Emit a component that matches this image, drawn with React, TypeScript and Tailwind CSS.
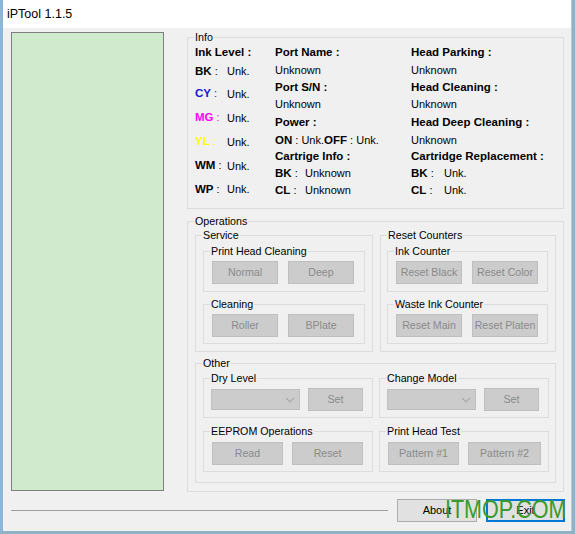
import type { ReactNode } from 'react';

// iPTool main window – static recreation

function GroupBox({
  title,
  className = '',
  children,
}: {
  title: string;
  className?: string;
  children?: ReactNode;
}) {
  return (
    <fieldset className={`border border-[#dcdcdc] ${className}`}>
      <legend className="ml-[6px] px-[1px] leading-[13px] text-[10.7px]">{title}</legend>
      {children}
    </fieldset>
  );
}

function Btn({ label, className = '' }: { label: string; className?: string }) {
  return (
    <div
      className={`h-[23px] flex items-center justify-center bg-[#cccccc] border border-[#bfbfbf] text-[#8a8a8a] text-[10.6px] whitespace-nowrap ${className}`}
    >
      {label}
    </div>
  );
}

function Combo() {
  return (
    <div className="w-[89px] h-[21px] bg-[#cccccc] border border-[#bfbfbf] flex items-center justify-end pr-[4px]">
      <svg width="10" height="6" viewBox="0 0 10 6">
        <polyline points="1,1 5,5 9,1" fill="none" stroke="#a8a8a8" strokeWidth="1.2" />
      </svg>
    </div>
  );
}

function Ink({ code, color }: { code: string; color: string }) {
  return (
    <div className="flex h-[24px] items-center">
      <span className={`w-[32px] ${color}`}>
        <b className="text-[11.5px]">{code}</b> :
      </span>
      <span>Unk.</span>
    </div>
  );
}

export default function App() {
  return (
    <div className="w-[575px] h-[534px] bg-[#8fb3c4] overflow-hidden font-['Liberation_Sans',Arial,sans-serif] text-[11px] text-black">
      <div className="relative w-[572px] h-[531px] bg-[#f0f0f0] border-l-[3px] border-[#8cb6d6] border-r border-r-[#b9c9d4] flex flex-col">
        {/* Title bar */}
        <div className="h-[28px] bg-white flex items-center pl-[4px] text-[12.5px]">iPTool 1.1.5</div>

        <div className="flex pt-[3px]">
          {/* Left preview panel */}
          <div className="ml-[8px] mt-[1px] w-[153px] h-[459px] bg-[#cfeacd] border border-[#7f7f7f]" />

          {/* Right column */}
          <div className="ml-[23px] w-[377px] flex flex-col">
            <GroupBox title="Info" className="h-[178px]">
              <div className="flex pl-[7px]">
                {/* Ink level */}
                <div className="w-[80px] flex flex-col">
                  <div className="h-[17px] flex items-center font-bold text-[11.5px]">Ink Level :</div>
                  <div className="h-[21px] flex items-center">
                    <span className="w-[32px]">
                      <b className="text-[11.5px]">BK</b> :
                    </span>
                    <span>Unk.</span>
                  </div>
                  <Ink code="CY" color="text-[#1515d6]" />
                  <Ink code="MG" color="text-[#ff00ff]" />
                  <Ink code="YL" color="text-[#ffff00]" />
                  <Ink code="WM" color="text-black" />
                  <div className="h-[23px] flex items-center">
                    <span className="w-[32px]">
                      <b className="text-[11.5px]">WP</b> :
                    </span>
                    <span>Unk.</span>
                  </div>
                </div>

                {/* Port / power / cartridge */}
                <div className="w-[136px] flex flex-col">
                  <div className="h-[17px] flex items-center font-bold text-[11.5px]">Port Name :</div>
                  <div className="h-[18px] flex items-center">Unknown</div>
                  <div className="h-[17px] flex items-center font-bold text-[11.5px]">Port S/N :</div>
                  <div className="h-[17px] flex items-center">Unknown</div>
                  <div className="h-[19px] flex items-center font-bold text-[11.5px]">Power :</div>
                  <div className="h-[17px] flex items-center whitespace-nowrap">
                    <b className="text-[11.5px]">ON</b>&nbsp;: Unk.<b className="text-[11.5px]">OFF</b>&nbsp;: Unk.
                  </div>
                  <div className="h-[16px] flex items-center font-bold text-[11.5px]">Cartrige Info :</div>
                  <div className="h-[17px] flex items-center">
                    <span className="w-[30px]">
                      <b className="text-[11.5px]">BK</b> :
                    </span>
                    Unknown
                  </div>
                  <div className="h-[17px] flex items-center">
                    <span className="w-[30px]">
                      <b className="text-[11.5px]">CL</b> :
                    </span>
                    Unknown
                  </div>
                </div>

                {/* Head status */}
                <div className="flex flex-col whitespace-nowrap">
                  <div className="h-[17px] flex items-center font-bold text-[11.5px]">Head Parking :</div>
                  <div className="h-[18px] flex items-center">Unknown</div>
                  <div className="h-[17px] flex items-center font-bold text-[11.5px]">Head Cleaning :</div>
                  <div className="h-[17px] flex items-center">Unknown</div>
                  <div className="h-[19px] flex items-center font-bold text-[11.5px]">Head Deep Cleaning :</div>
                  <div className="h-[17px] flex items-center">Unknown</div>
                  <div className="h-[16px] flex items-center font-bold text-[11.5px]">Cartridge Replacement :</div>
                  <div className="h-[17px] flex items-center">
                    <span className="w-[33px]">
                      <b className="text-[11.5px]">BK</b> :
                    </span>
                    Unk.
                  </div>
                  <div className="h-[17px] flex items-center">
                    <span className="w-[33px]">
                      <b className="text-[11.5px]">CL</b> :
                    </span>
                    Unk.
                  </div>
                </div>
              </div>
            </GroupBox>

            <GroupBox title="Operations" className="mt-[6px] h-[277px]">
              <div className="px-[7px] flex flex-col">
                <div className="mt-[1px] flex gap-[7px]">
                  <GroupBox title="Service" className="w-[178px] h-[123px]">
                    <div className="pl-[7px] flex flex-col">
                      <GroupBox title="Print Head Cleaning" className="mt-[3px] w-[162px] h-[47px]">
                        <div className="mt-[3px] pl-[8px] flex gap-[10px]">
                          <Btn label="Normal" className="w-[66px]" />
                          <Btn label="Deep" className="w-[66px]" />
                        </div>
                      </GroupBox>
                      <GroupBox title="Cleaning" className="mt-[6px] w-[162px] h-[46px]">
                        <div className="mt-[3px] pl-[8px] flex gap-[10px]">
                          <Btn label="Roller" className="w-[66px]" />
                          <Btn label="BPlate" className="w-[66px]" />
                        </div>
                      </GroupBox>
                    </div>
                  </GroupBox>

                  <GroupBox title="Reset Counters" className="w-[176px] h-[123px]">
                    <div className="pl-[6px] flex flex-col">
                      <GroupBox title="Ink Counter" className="mt-[3px] w-[161px] h-[47px]">
                        <div className="mt-[3px] pl-[8px] flex gap-[10px]">
                          <Btn label="Reset Black" className="w-[66px]" />
                          <Btn label="Reset Color" className="w-[66px]" />
                        </div>
                      </GroupBox>
                      <GroupBox title="Waste Ink Counter" className="mt-[6px] w-[161px] h-[46px]">
                        <div className="mt-[3px] pl-[8px] flex gap-[10px]">
                          <Btn label="Reset Main" className="w-[66px]" />
                          <Btn label="Reset Platen" className="w-[66px]" />
                        </div>
                      </GroupBox>
                    </div>
                  </GroupBox>
                </div>

                <GroupBox title="Other" className="mt-[5px] w-[361px] h-[126px]">
                  <div className="pl-[7px] flex flex-col">
                    <div className="mt-[2px] flex gap-[6px]">
                      <GroupBox title="Dry Level" className="w-[170px] h-[46px]">
                        <div className="mt-[3px] pl-[7px] flex items-center gap-[8px]">
                          <Combo />
                          <Btn label="Set" className="w-[55px]" />
                        </div>
                      </GroupBox>
                      <GroupBox title="Change Model" className="w-[170px] h-[46px]">
                        <div className="mt-[3px] pl-[7px] flex items-center gap-[8px]">
                          <Combo />
                          <Btn label="Set" className="w-[55px]" />
                        </div>
                      </GroupBox>
                    </div>
                    <div className="mt-[7px] flex gap-[6px]">
                      <GroupBox title="EEPROM Operations" className="w-[170px] h-[47px]">
                        <div className="mt-[4px] pl-[8px] flex gap-[9px]">
                          <Btn label="Read" className="w-[71px]" />
                          <Btn label="Reset" className="w-[71px]" />
                        </div>
                      </GroupBox>
                      <GroupBox title="Print Head Test" className="w-[170px] h-[47px]">
                        <div className="mt-[4px] pl-[8px] flex gap-[9px]">
                          <Btn label="Pattern #1" className="w-[71px]" />
                          <Btn label="Pattern #2" className="w-[73px]" />
                        </div>
                      </GroupBox>
                    </div>
                  </div>
                </GroupBox>
              </div>
            </GroupBox>
          </div>
        </div>

        {/* Bottom bar */}
        <div className="mt-[7px] flex items-center">
          <div className="ml-[8px] w-[377px] h-[1px] bg-[#a0a0a0]" />
          <div className="ml-[9px] w-[80px] h-[23px] flex items-center justify-center bg-[#e1e1e1] border border-[#adadad]">
            About
          </div>
          <div className="ml-[9px] w-[79px] h-[23px] flex items-center justify-center bg-[#e1e1e1] border-2 border-[#0078d7]">
            Exit
          </div>
        </div>

        {/* Watermark */}
        <div className="absolute left-[442px] top-[495px] text-[25px] leading-[28px] text-[#3a9a2c] origin-left scale-x-[0.86] whitespace-nowrap">
          ITMOP.COM
        </div>
      </div>
    </div>
  );
}
